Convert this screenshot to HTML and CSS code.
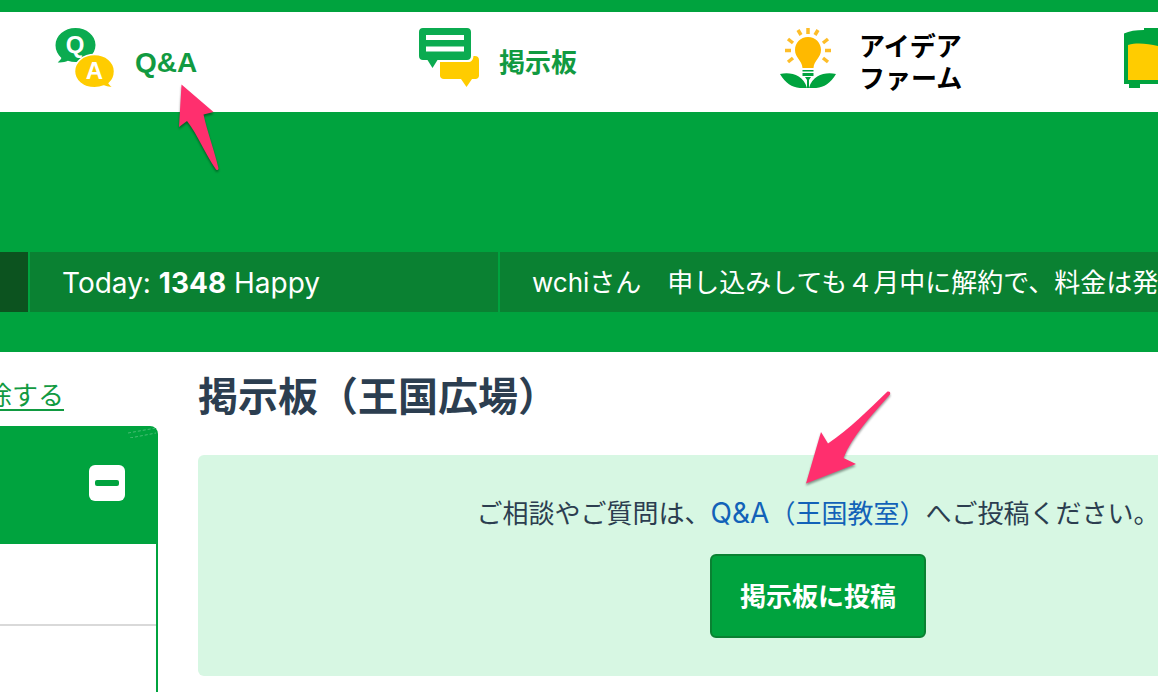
FILE: index.html
```html
<!DOCTYPE html>
<html lang="ja">
<head>
<meta charset="utf-8">
<meta name="viewport" content="width=device-width, initial-scale=1">
<title>掲示板（王国広場）</title>
<link rel="stylesheet" href="styles.css">
</head>
<body>
<header class="site-header">
  <nav class="main-nav">
    <a class="nav-item nav-item-latin" href="#qa">
      <svg class="nav-icon" viewBox="0 0 60 60" aria-hidden="true">
        <path fill="#0bab50" d="M20.500 0C9.500 0 .5 7.500.5 17.300c0 5 2.300 9.500 5.900 12.700-.7 1.700-2 3-3.700 4.400 4 .4 7.500-.4 10.200-1.600 2.500.8 5 1.200 7.600 1.200 11 0 20-7.500 20-17S31.500 0 20.500 0z"/>
        <path fill="#fc0" stroke="#fff" stroke-width="1.500" d="M39.500 26.500c-11.300 0-20 7.300-20 16.700s8.700 16.600 20 16.600c3.400 0 6.500-.6 9.300-1.800 3 1.400 6.400 1.800 9.700 1-1.800-.8-3.300-2-4.300-3.600 3.300-3 5.300-7.300 5.300-12.200 0-9.400-8.700-16.700-20-16.700z"/>
        <text class="bubble-letter" x="20" y="25">Q</text>
        <text class="bubble-letter" x="39.500" y="51">A</text>
      </svg>
      <span>Q&amp;A</span>
    </a>
    <a class="nav-item" href="#board">
      <svg class="nav-icon" viewBox="0 0 60 60" aria-hidden="true">
        <path fill="#fc0" d="M21 34h28c3.500 0 5-2 5.500-6 3.500-.5 5.500 1 5.500 4v15.500c0 2-1.500 3.500-3.500 3.500H53l-5.500 8L42 51H25c-2.500 0-4-1.500-4-3.500z"/>
        <path fill="#0bab50" d="M4 0h44c2.500 0 4 1.500 4 4v24c0 2.500-1.500 4-4 4H18.500L13.500 40 8.500 32H4c-2.500 0-4-1.500-4-4V4c0-2.500 1.500-4 4-4z"/>
        <path fill="#fff" d="M7 7h38v5H7zM7 18.500h38v5H7z"/>
      </svg>
      <span>掲示板</span>
    </a>
    <a class="nav-item nav-item-dark" href="#idea">
      <svg class="nav-icon" viewBox="0 0 60 60" aria-hidden="true">
        <path fill="#ffb900" d="M29 9c-7.500 0-13 5.700-13 13 0 8 7 10 7.500 18h11C35 32 42 30 42 22c0-7.300-5.500-13-13-13z"/>
        <path stroke="#fdbd28" stroke-width="3.500" fill="none" d="M29 0v6M19 2l3 5M39 2l-3 5M9 11l5 4M49 11l-5 4M6 22.500h6M46 22.500h6M9 34l5-4M49 34l-5-4"/>
        <path fill="#00a33e" d="M23.500 42h11v1.500h-11zM23.500 45h11v3h-11zM26 49h6l-2 3v8h-2v-8z"/>
        <path fill="#00a33e" d="M1 46c10-2 23 0 27 14C17 61 8 58 1 46zM57 46c-10-2-23 0-27 14 11 1 20-2 27-14z"/>
      </svg>
      <span>アイデア<br>ファーム</span>
    </a>
    <a class="nav-item nav-item-dark" href="#shop" aria-label="ショップ">
      <svg class="nav-icon" viewBox="0 0 60 60" aria-hidden="true">
        <path fill="#00a33e" d="M1 5.500C6 3 13 2 21 2V0h39v56H17v4H6v-4H1z"/>
        <path fill="#fc0" d="M5 17c10-3 20-1 30 1h25v34H5z"/>
      </svg>
    </a>
  </nav>
</header>
<section class="hero">
  <div class="ticker">
    <div class="ticker-cell ticker-label"></div>
    <div class="ticker-cell ticker-count">Today: <strong>1348</strong> Happy</div>
    <div class="ticker-cell">wchiさん　申し込みしても４月中に解約で、料金は発</div>
  </div>
</section>
<div class="content">
  <aside class="sidebar">
    <a class="clear-link" href="#clear">除する</a>
    <div class="filter">
      <div class="filter-head">
        <button class="toggle" type="button" aria-label="閉じる"><span class="minus"></span></button>
        <svg class="corner-mark" viewBox="0 0 28 10" aria-hidden="true"><path d="M0 5L28 0M2 10L28 5"/></svg>
      </div>
      <div class="filter-row"></div>
      <div class="filter-row"></div>
    </div>
  </aside>
  <main class="board">
    <h1 class="title">掲示板（王国広場）</h1>
    <section class="notice">
      <p class="notice-text">ご相談やご質問は、<a class="notice-link" href="#qa"><span class="notice-latin">Q&amp;A</span>（王国教室）</a>へご投稿ください。</p>
      <button class="post-button" type="button">掲示板に投稿</button>
    </section>
  </main>
</div>
<svg class="arrow arrow-up" viewBox="0 0 44 90" aria-hidden="true"><path d="M5.500 1.500L37.500 29 27.500 31.500C31 48 38 66 42.500 85.500Q42 88 40 86.500C29 71 22 52 11 38L3 44z"/></svg>
<svg class="arrow arrow-down" viewBox="0 0 90 98" aria-hidden="true"><path d="M2 95.500L17 44 24 55.500C46 41 64 22 83.500 3.500Q87 3 86 6.500C68 27 48 48 39.500 70L52 76z"/></svg>
</body>
</html>
```
FILE: styles.css
```css
* {
  box-sizing: border-box;
}

body {
  position: relative;
  margin: 0;
  min-height: 100vh;
  overflow: hidden;
  background: #fff;
  color: #2c3e50;
  font-family: Inter, "Noto Sans CJK JP", sans-serif;
  font-size: 26px;
}

a {
  color: #119a41;
}

button {
  font: inherit;
  cursor: pointer;
}

.site-header {
  border-top: 12px solid #00a33e;
}

.main-nav {
  display: grid;
  grid-template-columns: 364fr 360fr 344fr 35fr;
  height: 100px;
  padding-left: 55px;
}

.nav-item {
  display: flex;
  align-items: center;
  gap: 20px;
  min-width: 0;
  overflow: hidden;
  font-family: "Liberation Sans", "Noto Sans CJK JP", sans-serif;
  font-weight: 700;
  line-height: 32px;
  padding-top: 2px;
  text-decoration: none;
  white-space: nowrap;
}

.nav-item-latin {
  font-size: 28px;
}

.nav-item-dark {
  color: #000;
}

.nav-icon {
  flex: none;
  width: 60px;
  height: 60px;
  margin-bottom: 10px;
}

.bubble-letter {
  fill: #fff;
  font: 700 24px "Liberation Sans", sans-serif;
  text-anchor: middle;
}

.hero {
  padding: 140px 0 40px;
  background: #00a33e;
}

.ticker {
  display: grid;
  grid-template-columns: 28px 468px 1fr;
  gap: 2px;
}

.ticker-cell {
  height: 60px;
  padding: 1px 32px 0;
  overflow: hidden;
  background: #0a8132;
  color: #fff;
  line-height: 60px;
  white-space: nowrap;
}

.ticker-count {
  font-size: 28px;
}

.ticker-label {
  padding: 0;
  background: #0c531f;
}

.content {
  display: flex;
  gap: 40px;
}

.sidebar {
  flex: none;
  width: 172px;
  margin-left: -14px;
  padding-top: 24px;
}

.clear-link {
  display: block;
  height: 50px;
  line-height: 40px;
  text-decoration-thickness: 2px;
  text-underline-offset: 4px;
}

.filter {
  border: 2px solid #00a33e;
  border-bottom: 0;
  border-radius: 8px 8px 0 0;
}

.filter-head {
  position: relative;
  display: flex;
  align-items: center;
  justify-content: flex-end;
  height: 116px;
  padding: 0 31px 6px 0;
  background: #00a33e;
}

.toggle {
  display: grid;
  place-items: center;
  width: 36px;
  height: 36px;
  padding: 0;
  border: 0;
  border-radius: 6px;
  background: #fff;
}

.minus {
  width: 24px;
  height: 6px;
  border-radius: 2px;
  background: #00a33e;
}

.corner-mark {
  position: absolute;
  top: 0;
  right: 0;
  width: 28px;
  height: 10px;
  fill: none;
  stroke: #8fd6a8;
  stroke-width: 0.5;
  stroke-dasharray: 3 2;
}

.filter-row {
  height: 82px;
  border-bottom: 2px solid #d9d9d9;
}

.board {
  flex: none;
  width: calc(100% + 82px);
}

.title {
  margin: 0;
  padding: 15px 0 28px;
  font-size: 40px;
  line-height: 60px;
}

.notice {
  padding: 38px 0;
  border-radius: 6px;
  background: #d7f7e3;
  text-align: center;
}

.notice-text {
  margin: 0 0 20px;
  line-height: 40px;
}

.notice-link {
  color: #1262b8;
  text-decoration: none;
}

.notice-latin {
  font-size: 28px;
}

.post-button {
  display: block;
  height: 84px;
  margin: 0 auto;
  padding: 0 28px 4px;
  border: 2px solid #0a8132;
  border-radius: 6px;
  background: #00a33e;
  color: #fff;
  font-weight: 700;
}

.arrow {
  position: absolute;
  fill: #ff2f6e;
  filter: drop-shadow(0 2px 1px rgba(0, 0, 0, 0.4));
}

.arrow-up {
  top: 83px;
  left: 176px;
  width: 44px;
  height: 90px;
}

.arrow-down {
  top: 388px;
  left: 804px;
  width: 90px;
  height: 98px;
}
```
